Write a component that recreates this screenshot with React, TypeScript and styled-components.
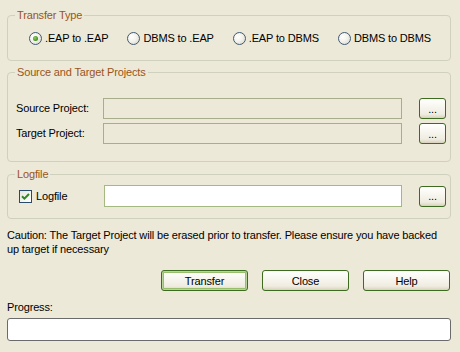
import React from "react";
import styled, { createGlobalStyle } from "styled-components";

const GlobalStyle = createGlobalStyle`
  html, body {
    margin: 0;
    padding: 0;
    background: #ece9d8;
  }
  body {
    font-family: "Liberation Sans", Arial, sans-serif;
    font-size: 11px;
    letter-spacing: -0.15px;
    color: #000;
  }
`;

const Dialog = styled.div`
  width: 460px;
  height: 352px;
  box-sizing: border-box;
  padding: 9px 9px 0 7px;
  display: flex;
  flex-direction: column;
  background: #ece9d8;
`;

const Group = styled.fieldset<{ $pt: number; $pb: number; $mt?: number }>`
  margin: ${(p) => p.$mt ?? 0}px 0 0 0;
  padding: ${(p) => p.$pt}px 4px ${(p) => p.$pb}px 8px;
  border: 1px solid #d0d0bf;
  border-radius: 4px;
  min-width: 0;
`;

const Legend = styled.legend`
  padding: 0 2px;
  margin-left: -1px;
  line-height: 13px;
  color: #9b5419;
`;

const RadioRow = styled.div`
  display: flex;
  align-items: center;
  gap: 19px;
  padding-left: 13px;
  height: 13px;
`;

const RadioItem = styled.label`
  display: flex;
  align-items: center;
  gap: 3px;
  line-height: 13px;
  white-space: nowrap;
`;

const RadioCircle = styled.span<{ $checked?: boolean }>`
  width: 13px;
  height: 13px;
  box-sizing: border-box;
  border-radius: 50%;
  border: 1px solid #3f5a74;
  background: radial-gradient(circle at 35% 35%, #ffffff 0%, #f3f2ec 45%, #d4d2c6 100%);
  display: flex;
  align-items: center;
  justify-content: center;

  &::after {
    content: "";
    display: ${(p) => (p.$checked ? "block" : "none")};
    width: 5px;
    height: 5px;
    border-radius: 50%;
    background: radial-gradient(circle at 40% 40%, #8fd15f 0%, #3d8a1f 70%, #2d6b14 100%);
  }
`;

const FieldRow = styled.div<{ $h: number; $inputStart: number }>`
  display: grid;
  grid-template-columns: ${(p) => p.$inputStart}px 1fr 44px;
  align-items: center;
  height: ${(p) => p.$h}px;

  & > button {
    justify-self: end;
  }
`;

const Rows = styled.div`
  display: flex;
  flex-direction: column;
  gap: 4px;
`;

const FieldLabel = styled.span`
  line-height: 13px;
  white-space: nowrap;
`;

const TextBox = styled.div<{ $enabled?: boolean }>`
  height: 100%;
  box-sizing: border-box;
  border: 1px solid ${(p) => (p.$enabled ? "#a4b97f" : "#a8ae8c")};
  background: ${(p) => (p.$enabled ? "#ffffff" : "#ece9d8")};
`;

const Button = styled.button<{ $default?: boolean; $w?: number; $h?: number }>`
  width: ${(p) => p.$w ?? 27}px;
  height: ${(p) => p.$h ?? 21}px;
  box-sizing: border-box;
  padding: 0;
  margin: 0;
  font-family: "Liberation Sans", Arial, sans-serif;
  font-size: 11px;
  letter-spacing: -0.15px;
  color: #000;
  border: 1px solid #3d6b1f;
  border-radius: 3px;
  background: linear-gradient(
    to bottom,
    #ffffff 0%,
    #f7f6ef 40%,
    #efece0 80%,
    #e2dccb 92%,
    #d6cfba 100%
  );
  box-shadow: ${(p) =>
    p.$default ? "inset 0 0 0 1px #b8d49a, inset 0 0 0 2px #98bd6c" : "none"};
  display: flex;
  align-items: center;
  justify-content: center;
`;

const CheckLabel = styled.label`
  display: flex;
  align-items: center;
  gap: 4px;
  padding-left: 3px;
  line-height: 13px;
`;

const CheckBox = styled.span`
  width: 13px;
  height: 13px;
  box-sizing: border-box;
  border: 1px solid #2a4a6b;
  background: linear-gradient(135deg, #e6e6df 0%, #ffffff 100%);
  display: flex;
  align-items: center;
  justify-content: center;
`;

const Caution = styled.p`
  margin: 9px 0 0 0;
  line-height: 14px;
  padding-right: 6px;
`;

const ButtonBar = styled.div`
  display: flex;
  justify-content: flex-end;
  gap: 14px;
  margin-top: 14px;
  padding-right: 1px;
`;

const ProgressLabel = styled.div`
  margin-top: 9px;
  line-height: 14px;
`;

const ProgressBar = styled.div`
  margin-top: 4px;
  height: 23px;
  box-sizing: border-box;
  border: 1px solid #6b6b6b;
  border-radius: 3px;
  background: #ffffff;
`;

const transferTypes = [".EAP to .EAP", "DBMS to .EAP", ".EAP to DBMS", "DBMS to DBMS"];

export default function App() {
  return (
    <>
      <GlobalStyle />
      <Dialog>
        <Group $pt={10} $pb={15}>
          <Legend>Transfer Type</Legend>
          <RadioRow>
            {transferTypes.map((t, i) => (
              <RadioItem key={t}>
                <RadioCircle $checked={i === 0} />
                {t}
              </RadioItem>
            ))}
          </RadioRow>
        </Group>

        <Group $pt={19} $pb={17} $mt={5}>
          <Legend>Source and Target Projects</Legend>
          <Rows>
            <FieldRow $h={21} $inputStart={87}>
              <FieldLabel>Source Project:</FieldLabel>
              <TextBox />
              <Button>...</Button>
            </FieldRow>
            <FieldRow $h={21} $inputStart={87}>
              <FieldLabel>Target Project:</FieldLabel>
              <TextBox />
              <Button>...</Button>
            </FieldRow>
          </Rows>
        </Group>

        <Group $pt={4} $pb={11} $mt={6}>
          <Legend>Logfile</Legend>
          <FieldRow $h={22} $inputStart={88}>
            <CheckLabel>
              <CheckBox>
                <svg width="9" height="9" viewBox="0 0 9 9">
                  <path
                    d="M1 4.2 L3.4 6.6 L8 2"
                    fill="none"
                    stroke="#2f8a1d"
                    strokeWidth="2"
                  />
                </svg>
              </CheckBox>
              Logfile
            </CheckLabel>
            <TextBox $enabled />
            <Button>...</Button>
          </FieldRow>
        </Group>

        <Caution>
          Caution: The Target Project will be erased prior to transfer. Please ensure you have backed
          up target if necessary
        </Caution>

        <ButtonBar>
          <Button $default $w={87}>Transfer</Button>
          <Button $w={87}>Close</Button>
          <Button $w={87}>Help</Button>
        </ButtonBar>

        <ProgressLabel>Progress:</ProgressLabel>
        <ProgressBar />
      </Dialog>
    </>
  );
}
